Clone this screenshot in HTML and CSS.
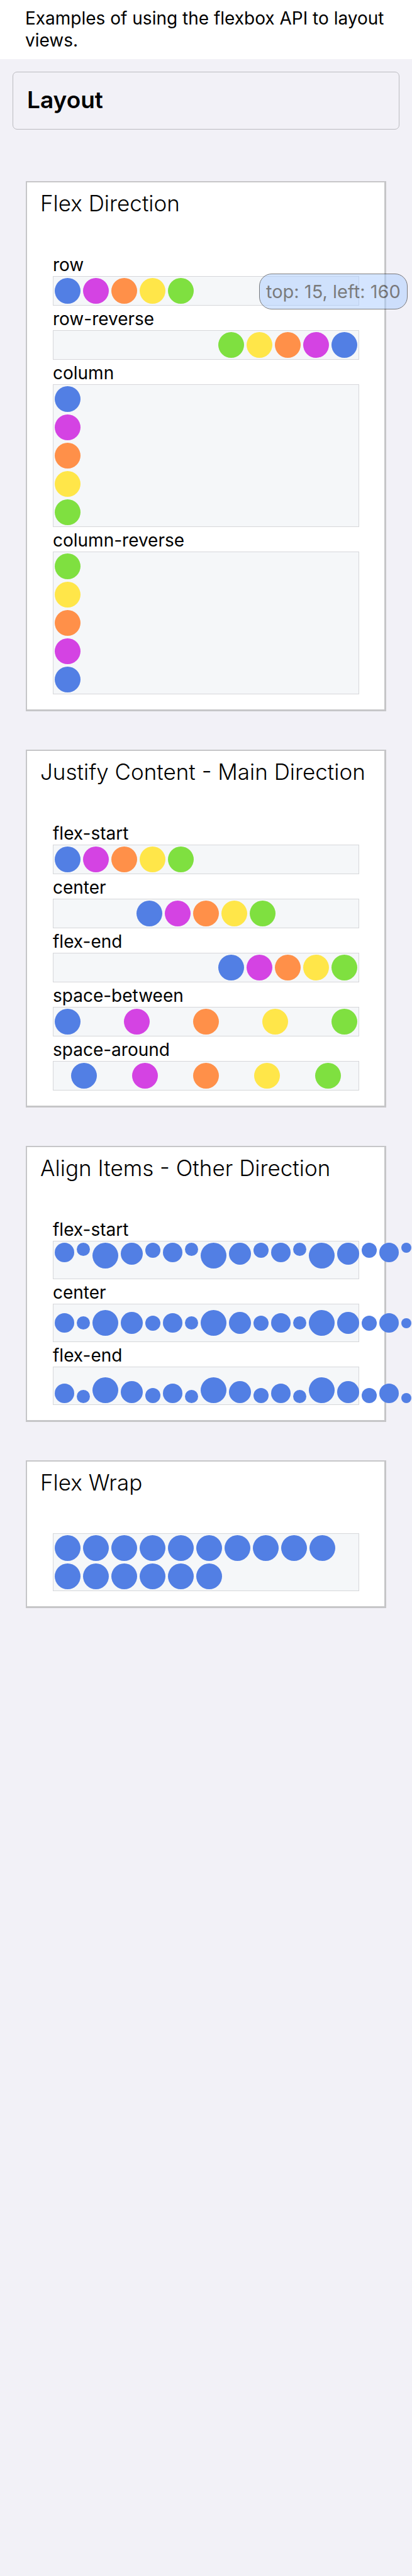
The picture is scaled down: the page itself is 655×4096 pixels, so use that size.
FILE: index.html
```html
<!DOCTYPE html>
<html lang="en">
<head>
<meta charset="utf-8">
<meta name="viewport" content="width=device-width, initial-scale=1">
<title>Layout</title>
<link rel="stylesheet" href="styles.css">
</head>
<body class="page">
<p class="description">Examples of using the flexbox API to layout views.</p>
<h1 class="heading">Layout</h1>
<main class="cards">
  <section class="card">
    <h2 class="card-title">Flex Direction</h2>
    <div class="example">
      <h3 class="label">row</h3>
      <div class="box"><i class="dot blue"></i><i class="dot purple"></i><i class="dot orange"></i><i class="dot yellow"></i><i class="dot green"></i></div>
      <div class="overlay">top: 15, left: 160</div>
    </div>
    <div class="example">
      <h3 class="label">row-reverse</h3>
      <div class="box row-reverse"><i class="dot blue"></i><i class="dot purple"></i><i class="dot orange"></i><i class="dot yellow"></i><i class="dot green"></i></div>
    </div>
    <div class="example">
      <h3 class="label">column</h3>
      <div class="box column"><i class="dot blue"></i><i class="dot purple"></i><i class="dot orange"></i><i class="dot yellow"></i><i class="dot green"></i></div>
    </div>
    <div class="example">
      <h3 class="label">column-reverse</h3>
      <div class="box column-reverse"><i class="dot blue"></i><i class="dot purple"></i><i class="dot orange"></i><i class="dot yellow"></i><i class="dot green"></i></div>
    </div>
  </section>

  <section class="card">
    <h2 class="card-title">Justify Content - Main Direction</h2>
    <div class="example">
      <h3 class="label">flex-start</h3>
      <div class="box"><i class="dot blue"></i><i class="dot purple"></i><i class="dot orange"></i><i class="dot yellow"></i><i class="dot green"></i></div>
    </div>
    <div class="example">
      <h3 class="label">center</h3>
      <div class="box justify-center"><i class="dot blue"></i><i class="dot purple"></i><i class="dot orange"></i><i class="dot yellow"></i><i class="dot green"></i></div>
    </div>
    <div class="example">
      <h3 class="label">flex-end</h3>
      <div class="box justify-end"><i class="dot blue"></i><i class="dot purple"></i><i class="dot orange"></i><i class="dot yellow"></i><i class="dot green"></i></div>
    </div>
    <div class="example">
      <h3 class="label">space-between</h3>
      <div class="box justify-between"><i class="dot blue"></i><i class="dot purple"></i><i class="dot orange"></i><i class="dot yellow"></i><i class="dot green"></i></div>
    </div>
    <div class="example">
      <h3 class="label">space-around</h3>
      <div class="box justify-around"><i class="dot blue"></i><i class="dot purple"></i><i class="dot orange"></i><i class="dot yellow"></i><i class="dot green"></i></div>
    </div>
  </section>

  <section class="card">
    <h2 class="card-title">Align Items - Other Direction</h2>
    <div class="example">
      <h3 class="label">flex-start</h3>
      <div class="box tall align-start"><i class="dot blue s15"></i><i class="dot blue s10"></i><i class="dot blue"></i><i class="dot blue s17"></i><i class="dot blue s12"></i><i class="dot blue s15"></i><i class="dot blue s10"></i><i class="dot blue"></i><i class="dot blue s17"></i><i class="dot blue s12"></i><i class="dot blue s15"></i><i class="dot blue s10"></i><i class="dot blue"></i><i class="dot blue s17"></i><i class="dot blue s12"></i><i class="dot blue s15"></i><i class="dot blue s8"></i></div>
    </div>
    <div class="example">
      <h3 class="label">center</h3>
      <div class="box tall align-center"><i class="dot blue s15"></i><i class="dot blue s10"></i><i class="dot blue"></i><i class="dot blue s17"></i><i class="dot blue s12"></i><i class="dot blue s15"></i><i class="dot blue s10"></i><i class="dot blue"></i><i class="dot blue s17"></i><i class="dot blue s12"></i><i class="dot blue s15"></i><i class="dot blue s10"></i><i class="dot blue"></i><i class="dot blue s17"></i><i class="dot blue s12"></i><i class="dot blue s15"></i><i class="dot blue s8"></i></div>
    </div>
    <div class="example">
      <h3 class="label">flex-end</h3>
      <div class="box tall align-end"><i class="dot blue s15"></i><i class="dot blue s10"></i><i class="dot blue"></i><i class="dot blue s17"></i><i class="dot blue s12"></i><i class="dot blue s15"></i><i class="dot blue s10"></i><i class="dot blue"></i><i class="dot blue s17"></i><i class="dot blue s12"></i><i class="dot blue s15"></i><i class="dot blue s10"></i><i class="dot blue"></i><i class="dot blue s17"></i><i class="dot blue s12"></i><i class="dot blue s15"></i><i class="dot blue s8"></i></div>
    </div>
  </section>

  <section class="card">
    <h2 class="card-title">Flex Wrap</h2>
    <div class="box wrap"><i class="dot blue"></i><i class="dot blue"></i><i class="dot blue"></i><i class="dot blue"></i><i class="dot blue"></i><i class="dot blue"></i><i class="dot blue"></i><i class="dot blue"></i><i class="dot blue"></i><i class="dot blue"></i><i class="dot blue"></i><i class="dot blue"></i><i class="dot blue"></i><i class="dot blue"></i><i class="dot blue"></i><i class="dot blue"></i></div>
  </section>
</main>
</body>
</html>
```

FILE: styles.css
```css
* {
  box-sizing: border-box;
}

.page {
  margin: 0;
  min-height: 100vh;
  overflow-x: hidden;
  background: #f2f1f7;
  color: #000;
  font-family: Inter, "Liberation Sans", sans-serif;
  font-size: 28px;
  line-height: 35px;
}

.description {
  margin: 0;
  padding: 12px 40px;
  background: #fff;
}

.heading {
  margin: 20px;
  padding: 22px 22px 24px;
  border: 1px solid #bbbbc0;
  border-radius: 7px;
  font-size: 37px;
  font-weight: 600;
  line-height: 44px;
}

.cards {
  display: flex;
  flex-direction: column;
  gap: 61px;
  padding: 62px 41px;
}

.card {
  padding: 12px 40px 24px 41px;
  border: 2px solid #c6c6c8;
  border-right-width: 3px;
  border-bottom-width: 3px;
  background: #fff;
}

.card-title {
  margin: 0 -20px 60px;
  font-size: 35px;
  font-weight: 300;
  line-height: 42px;
}

.example {
  position: relative;
}

.example + .example {
  margin-top: 4px;
}

.label {
  margin: 0;
  font-size: 28px;
  font-weight: 400;
  line-height: 35px;
}

.box {
  display: flex;
  border: 1px solid #d6d7da;
  background: #f5f7f9;
}

.row-reverse { flex-direction: row-reverse; }
.column { flex-direction: column; }
.column-reverse { flex-direction: column-reverse; }
.justify-center { justify-content: center; }
.justify-end { justify-content: flex-end; }
.justify-between { justify-content: space-between; }
.justify-around { justify-content: space-around; }
.tall { height: 61px; }
.align-start { align-items: flex-start; }
.align-center { align-items: center; }
.align-end { align-items: flex-end; }
.wrap { flex-wrap: wrap; }

.dot {
  flex: none;
  width: 41px;
  height: 41px;
  margin: 2px;
  border-radius: 50%;
}

.s17 { width: 35px; height: 35px; }
.s15 { width: 31px; height: 31px; }
.s12 { width: 24px; height: 24px; }
.s10 { width: 21px; height: 21px; }
.s8 { width: 16px; height: 16px; }

.blue { background: #527fe4; }
.purple { background: #d443e3; }
.orange { background: #ff9049; }
.yellow { background: #ffe649; }
.green { background: #7fe040; }

.overlay {
  position: absolute;
  top: 31px;
  left: 328px;
  padding: 10px;
  border: 1px solid #000;
  border-radius: 20px;
  background: #acf;
  font-size: 29px;
  opacity: 0.5;
  white-space: nowrap;
}
```
